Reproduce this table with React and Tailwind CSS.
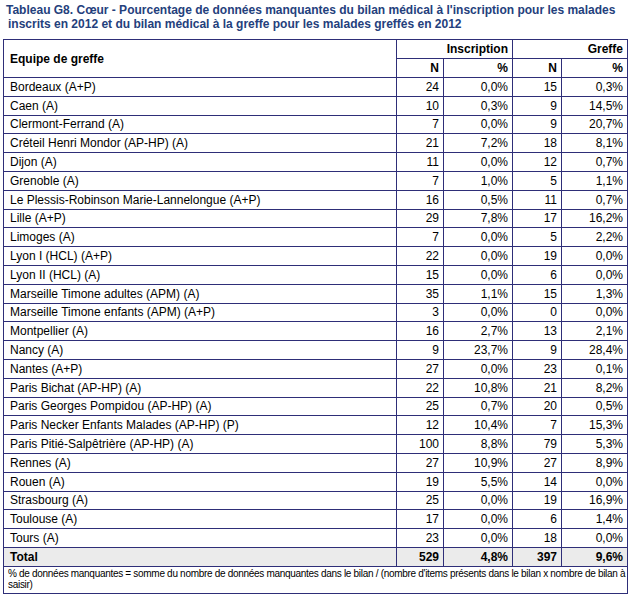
import React from 'react';

const rows = [
    ['Bordeaux (A+P)', '24', '0,0%', '15', '0,3%'],
    ['Caen (A)', '10', '0,3%', '9', '14,5%'],
    ['Clermont-Ferrand (A)', '7', '0,0%', '9', '20,7%'],
    ['Créteil Henri Mondor (AP-HP) (A)', '21', '7,2%', '18', '8,1%'],
    ['Dijon (A)', '11', '0,0%', '12', '0,7%'],
    ['Grenoble (A)', '7', '1,0%', '5', '1,1%'],
    ['Le Plessis-Robinson Marie-Lannelongue (A+P)', '16', '0,5%', '11', '0,7%'],
    ['Lille (A+P)', '29', '7,8%', '17', '16,2%'],
    ['Limoges (A)', '7', '0,0%', '5', '2,2%'],
    ['Lyon I (HCL) (A+P)', '22', '0,0%', '19', '0,0%'],
    ['Lyon II (HCL) (A)', '15', '0,0%', '6', '0,0%'],
    ['Marseille Timone adultes (APM) (A)', '35', '1,1%', '15', '1,3%'],
    ['Marseille Timone enfants (APM) (A+P)', '3', '0,0%', '0', '0,0%'],
    ['Montpellier (A)', '16', '2,7%', '13', '2,1%'],
    ['Nancy (A)', '9', '23,7%', '9', '28,4%'],
    ['Nantes (A+P)', '27', '0,0%', '23', '0,1%'],
    ['Paris Bichat (AP-HP) (A)', '22', '10,8%', '21', '8,2%'],
    ['Paris Georges Pompidou (AP-HP) (A)', '25', '0,7%', '20', '0,5%'],
    ['Paris Necker Enfants Malades (AP-HP) (P)', '12', '10,4%', '7', '15,3%'],
    ['Paris Pitié-Salpêtrière (AP-HP) (A)', '100', '8,8%', '79', '5,3%'],
    ['Rennes (A)', '27', '10,9%', '27', '8,9%'],
    ['Rouen (A)', '19', '5,5%', '14', '0,0%'],
    ['Strasbourg (A)', '25', '0,0%', '19', '16,9%'],
    ['Toulouse (A)', '17', '0,0%', '6', '1,4%'],
    ['Tours (A)', '23', '0,0%', '18', '0,0%'],
];

const cell = 'border border-[#2e2e78] px-[4px] py-0 leading-[14px]';

export default function App() {
    return (
        <div className="bg-white w-[634px] h-[596px] font-['Liberation_Sans',Arial,sans-serif] text-[12px] text-black">
            {/* Title */}
            <div className="pt-[3px] pl-[6px] font-bold text-[12px] leading-[14px] text-[#24407c]">
                Tableau G8. Cœur - Pourcentage de données manquantes du bilan médical à l'inscription pour les malades
                <br />
                <span className="pl-[2px]">inscrits en 2012 et du bilan médical à la greffe pour les malades greffés en 2012</span>
            </div>

            {/* Table */}
            <table className="mt-[8px] ml-[3px] w-[624px] table-fixed border-collapse">
                <colgroup>
                    <col className="w-[393px]" />
                    <col className="w-[47px]" />
                    <col className="w-[69px]" />
                    <col className="w-[49px]" />
                    <col className="w-[66px]" />
                </colgroup>
                <thead>
                    <tr className="h-[19px]">
                        <th rowSpan={2} className={`${cell} pl-[6px] text-left font-bold`}>Equipe de greffe</th>
                        <th colSpan={2} className={`${cell} text-right font-bold`}>Inscription</th>
                        <th colSpan={2} className={`${cell} text-right font-bold`}>Greffe</th>
                    </tr>
                    <tr className="h-[19px]">
                        <th className={`${cell} text-right font-bold`}>N</th>
                        <th className={`${cell} text-right font-bold`}>%</th>
                        <th className={`${cell} text-right font-bold`}>N</th>
                        <th className={`${cell} text-right font-bold`}>%</th>
                    </tr>
                </thead>
                <tbody>
                    {rows.map(r => (
                        <tr key={r[0]} className="h-[18.8px]">
                            <td className={`${cell} pl-[6px] text-left`}>{r[0]}</td>
                            <td className={`${cell} text-right`}>{r[1]}</td>
                            <td className={`${cell} text-right`}>{r[2]}</td>
                            <td className={`${cell} text-right`}>{r[3]}</td>
                            <td className={`${cell} text-right`}>{r[4]}</td>
                        </tr>
                    ))}
                    <tr className="h-[19px] bg-[#ebebeb] font-bold">
                        <td className={`${cell} pl-[6px] text-left`}>Total</td>
                        <td className={`${cell} text-right`}>529</td>
                        <td className={`${cell} text-right`}>4,8%</td>
                        <td className={`${cell} text-right`}>397</td>
                        <td className={`${cell} text-right`}>9,6%</td>
                    </tr>
                    <tr>
                        <td colSpan={5} className="border border-[#2e2e78] px-[4px] pt-[1px] pb-[3px] text-[10px] leading-[11px] tracking-[-0.3px] whitespace-nowrap">
                            % de données manquantes = somme du nombre de données manquantes dans le bilan / (nombre d'items présents dans le bilan x nombre de bilan à
                            <br />
                            saisir)
                        </td>
                    </tr>
                </tbody>
            </table>
        </div>
    );
}
